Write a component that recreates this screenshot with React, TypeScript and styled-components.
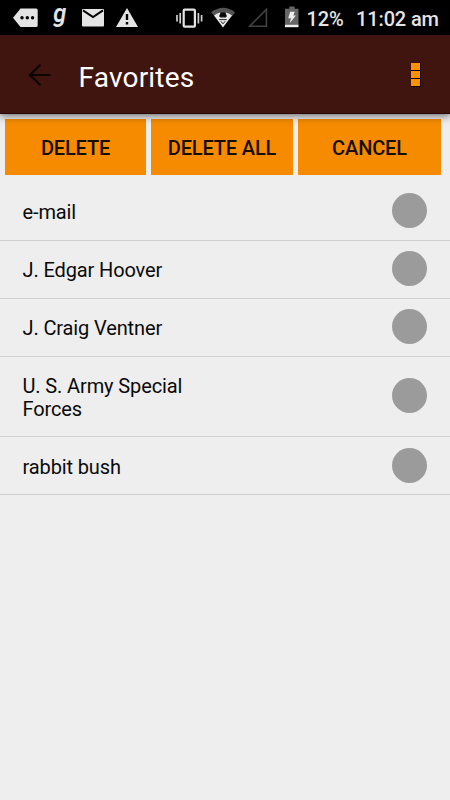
import React from 'react';
import styled, { createGlobalStyle } from 'styled-components';

const GlobalStyle = createGlobalStyle`
  * { box-sizing: border-box; }
  body { margin: 0; background: #eee; font-family: Roboto, "Liberation Sans", sans-serif; }
`;

const Screen = styled.div`
  width: 450px;
  height: 800px;
  display: flex;
  flex-direction: column;
  background: #eee;
  overflow: hidden;
`;

const StatusBar = styled.div`
  height: 35px;
  flex: none;
  display: flex;
  background: #000;
  color: #e4e4e4;
`;

const StatusIcon = styled.svg<{ $gap: number }>`
  display: block;
  flex: none;
  height: 35px;
  margin-left: ${(p) => p.$gap}px;
`;

const StatusText = styled.span<{ $gap: number; $width: number }>`
  flex: none;
  width: ${(p) => p.$width}px;
  margin-left: ${(p) => p.$gap}px;
  font-size: 20px;
  font-weight: 500;
  line-height: 38px;
  letter-spacing: -0.15px;
  white-space: nowrap;
`;

const AppBar = styled.header`
  height: 79px;
  flex: none;
  display: flex;
  align-items: center;
  position: relative;
  padding: 0 29px 0 28px;
  background: #40140f;
  border-bottom: 1px solid #2a0705;
  box-shadow: 0 3px 8px rgba(0, 0, 0, 0.4), 0 0 4px rgba(0, 0, 0, 0.25);
`;

const BackButton = styled.button`
  padding: 0;
  border: 0;
  background: none;
  width: 23px;
  height: 24px;
  margin-top: 1px;
`;

const Title = styled.h1`
  flex: 1;
  margin: 8px 0 0 27.5px;
  font-size: 28px;
  font-weight: 400;
  line-height: 34px;
  letter-spacing: 0.2px;
  color: #fff;
`;

const MenuButton = styled.button`
  display: flex;
  flex-direction: column;
  padding: 0;
  border: 0;
  background: none;
  margin-top: 1px;
`;

const MenuDot = styled.span`
  width: 10px;
  height: 8px;
  background: #fb9204;
  border: solid #100200;
  border-width: 0 1px 1px 0;
`;

const Actions = styled.div`
  display: grid;
  grid-template-columns: 141px 142.5px 143px;
  column-gap: 4.75px;
  height: 61px;
  flex: none;
  padding: 5px 0 0 5px;
`;

const ActionButton = styled.button`
  padding: 2px 0 0;
  border: 0;
  background: #f68b00;
  color: #160e04;
  font: 500 20px/24px Roboto, "Liberation Sans", sans-serif;
  letter-spacing: -0.15px;
  white-space: nowrap;
`;

const List = styled.ul`
  margin: 0;
  padding: 7px 0 0;
  list-style: none;
`;

const Row = styled.li<{ $height: number }>`
  display: flex;
  align-items: center;
  justify-content: space-between;
  height: ${(p) => p.$height}px;
  padding: 0 23px 0 22.5px;
  border-bottom: 1px solid #d0d0d0;
`;

const Name = styled.span`
  width: 185px;
  padding-top: 2px;
  font-size: 20px;
  line-height: 22.5px;
  letter-spacing: -0.12px;
  color: #0a0a0a;
`;

const Toggle = styled.button`
  width: 35px;
  height: 35px;
  padding: 0;
  border: 0;
  border-radius: 50%;
  background: #9b9b9b;
  margin-bottom: 1.5px;
`;

const items = [
  { name: 'e-mail', height: 59 },
  { name: 'J. Edgar Hoover', height: 58 },
  { name: 'J. Craig Ventner', height: 58 },
  { name: 'U. S. Army Special Forces', height: 80.4 },
  { name: 'rabbit bush', height: 58 },
];

const MessageIcon = () => (
  <StatusIcon $gap={13} width={25} viewBox="0 0 25 35">
    <path d="M7.5 8.5H23Q24.7 8.5 24.7 10V25.5Q24.7 27 23 27H7.5L0 17.7Z" fill="#e4e4e4" />
    <circle cx="9" cy="17.8" r="1.7" />
    <circle cx="14.3" cy="17.8" r="1.7" />
    <circle cx="19.6" cy="17.8" r="1.7" />
  </StatusIcon>
);

const GIcon = () => (
  <StatusIcon $gap={14} width={16} viewBox="0 0 16 35">
    <text x="1.2" y="22.2" fontFamily="Roboto" fontSize="25" fontStyle="italic" fontWeight="600" fill="#e4e4e4" textLength="13" lengthAdjust="spacingAndGlyphs">g</text>
  </StatusIcon>
);

const MailIcon = () => (
  <StatusIcon $gap={14} width={22} viewBox="0 0 22 35">
    <rect x="0" y="9" width="22" height="17.5" rx="1" fill="#e4e4e4" />
    <path d="M1 10.3L11 17L21 10.3" fill="none" stroke="#000" strokeWidth="2" />
  </StatusIcon>
);

const WarningIcon = () => (
  <StatusIcon $gap={11.5} width={22} viewBox="0 0 22 35">
    <path d="M11 8L22 27H0Z" fill="#e4e4e4" />
    <path d="M11 14V20M11 22V24.5" stroke="#000" strokeWidth="2.4" />
  </StatusIcon>
);

const VibrateIcon = () => (
  <StatusIcon $gap={38} width={27} viewBox="0 0 27 35">
    <rect x="7.7" y="9.7" width="11.2" height="17" rx="1" fill="none" stroke="#e4e4e4" strokeWidth="2.2" />
    <path d="M1 15V21.5M4.2 13V23.5M22.4 13V23.5M25.6 15V21.5" stroke="#cfcfcf" strokeWidth="1.7" />
  </StatusIcon>
);

const WifiIcon = () => (
  <StatusIcon $gap={8} width={25} viewBox="0 0 25 35">
    <path d="M0 12.3Q12.5 3.3 24 12.3L21 16.5H4Z" fill="#545454" />
    <path d="M3 15.4Q6 12.9 9.4 12.5L8 16.2L9.4 17.6H14.6L16 16.2L14.6 12.5Q18 12.9 21 15.4L12 27.5Z" fill="#e8e8e8" />
    <path d="M9.8 12.6L8.6 16L10.6 17L12 15.9L13.4 17L15.4 16L14.2 12.6Z" fill="#080808" />
    <path d="M8.2 19.6H15.8M9.8 21.2L12 23.8L14.2 21.2" fill="none" stroke="#111" strokeWidth="0.9" />
  </StatusIcon>
);

const SignalIcon = () => (
  <StatusIcon $gap={12} width={20} viewBox="0 0 20 35">
    <path d="M18.4 9.5V26.2H1.7Z" fill="none" stroke="#424242" strokeWidth="1.6" />
  </StatusIcon>
);

const BatteryIcon = () => (
  <StatusIcon $gap={17} width={14} viewBox="0 0 14 35">
    <path d="M0 8.7H4.3V6.5H9.6V8.7H13.5V25H0Z" fill="#666" />
    <path d="M0 24.8H13.5V27.2H0Z" fill="#eee" />
    <path d="M5.2 11.8H9.8L8.3 15.6H10.9L4.7 23.3L6 18.3H3.2Z" fill="#eee" />
  </StatusIcon>
);

export default function App() {
  return (
    <Screen>
      <GlobalStyle />
      <StatusBar>
        <MessageIcon />
        <GIcon />
        <MailIcon />
        <WarningIcon />
        <VibrateIcon />
        <WifiIcon />
        <SignalIcon />
        <BatteryIcon />
        <StatusText $gap={8} $width={37}>12%</StatusText>
        <StatusText $gap={12.6} $width={84}>11:02 am</StatusText>
      </StatusBar>
      <AppBar>
        <BackButton aria-label="Back">
          <svg width="23" height="24" viewBox="0 0 23 24" fill="none" stroke="#0c0403" strokeWidth="2.2">
            <path d="M12.4 1.7L2 12L12.4 22.3M2 12H22.5" />
          </svg>
        </BackButton>
        <Title>Favorites</Title>
        <MenuButton aria-label="More options">
          <MenuDot />
          <MenuDot />
          <MenuDot />
        </MenuButton>
      </AppBar>
      <Actions>
        <ActionButton>DELETE</ActionButton>
        <ActionButton>DELETE ALL</ActionButton>
        <ActionButton>CANCEL</ActionButton>
      </Actions>
      <List>
        {items.map((item) => (
          <Row key={item.name} $height={item.height}>
            <Name>{item.name}</Name>
            <Toggle aria-label={`Select ${item.name}`} />
          </Row>
        ))}
      </List>
    </Screen>
  );
}
